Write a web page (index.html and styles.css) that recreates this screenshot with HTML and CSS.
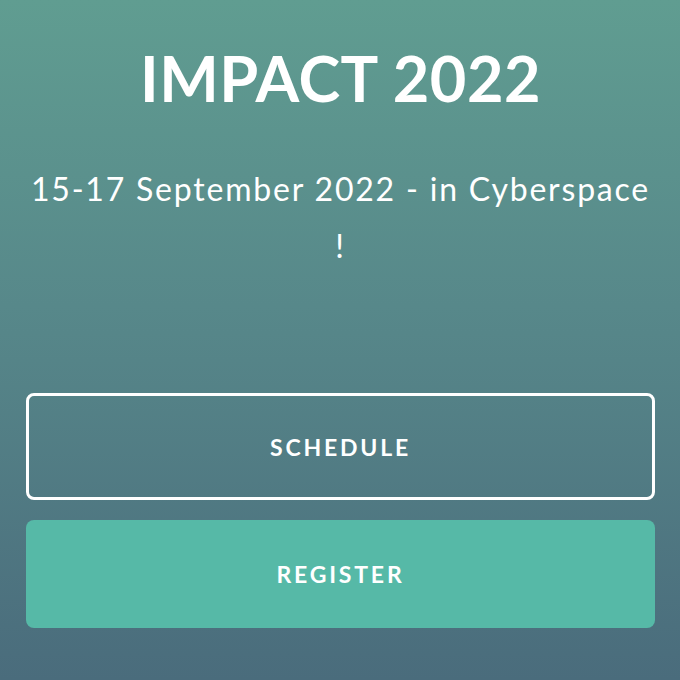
FILE: index.html
```html
<!DOCTYPE html>
<html lang="en">
<head>
<meta charset="utf-8">
<title>IMPACT 2022</title>
<link rel="stylesheet" href="styles.css">
</head>
<body>
<main class="hero">
  <h1 class="title">IMPACT 2022</h1>
  <p class="subtitle">15-17 September 2022 - in Cyberspace !</p>
  <div class="actions">
    <a class="btn btn-outline" href="#">SCHEDULE</a>
    <a class="btn btn-solid" href="#">REGISTER</a>
  </div>
</main>
</body>
</html>
```
FILE: styles.css
```css
html, body {
  margin: 0;
  padding: 0;
  height: 100%;
}
body {
  background: linear-gradient(to bottom, #609d91 0%, #57888a 45%, #4a6c7c 100%);
  font-family: "Lato", "Noto Sans", sans-serif;
  color: #ffffff;
}
.hero {
  box-sizing: border-box;
  height: 680px;
  padding: 38px 25px 0 26px;
  display: flex;
  flex-direction: column;
  align-items: stretch;
  text-align: center;
}
.title {
  margin: 0;
  font-size: 63px;
  font-weight: 700;
  line-height: 80px;
  letter-spacing: 0.5px;
}
.subtitle {
  margin: 42px 0 0 0;
  font-size: 32px;
  font-weight: 400;
  line-height: 57px;
  letter-spacing: 1.8px;
  padding: 0 4px;
}
.actions {
  margin-top: 119px;
  display: flex;
  flex-direction: column;
  gap: 20px;
}
.btn {
  display: flex;
  align-items: center;
  justify-content: center;
  box-sizing: border-box;
  height: 108px;
  border-radius: 8px;
  color: #ffffff;
  text-decoration: none;
  font-size: 23px;
  font-weight: 700;
  letter-spacing: 2.8px;
}
.btn-outline {
  border: 3px solid #ffffff;
  height: 107px;
}
.btn-solid {
  background: #56b9a7;
}
```
